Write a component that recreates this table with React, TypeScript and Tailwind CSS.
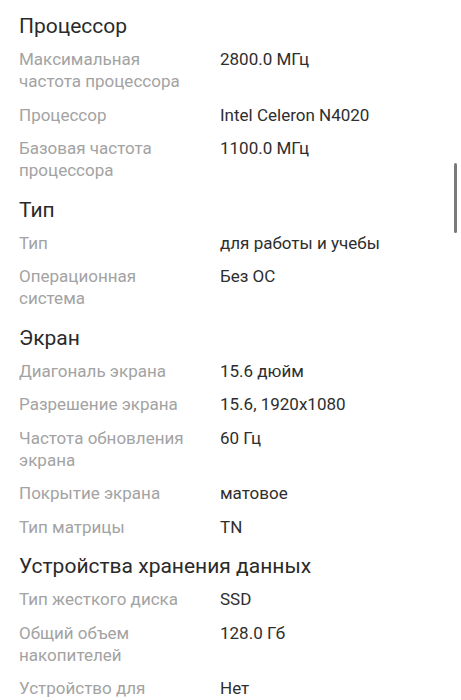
type Spec = { label: string; value: string };
type Section = { title: string; items: Spec[] };

const sections: Section[] = [
  {
    title: "Процессор",
    items: [
      { label: "Максимальная частота процессора", value: "2800.0 МГц" },
      { label: "Процессор", value: "Intel Celeron N4020" },
      { label: "Базовая частота процессора", value: "1100.0 МГц" },
    ],
  },
  {
    title: "Тип",
    items: [
      { label: "Тип", value: "для работы и учебы" },
      { label: "Операционная система", value: "Без ОС" },
    ],
  },
  {
    title: "Экран",
    items: [
      { label: "Диагональ экрана", value: "15.6 дюйм" },
      { label: "Разрешение экрана", value: "15.6, 1920x1080" },
      { label: "Частота обновления экрана", value: "60 Гц" },
      { label: "Покрытие экрана", value: "матовое" },
      { label: "Тип матрицы", value: "TN" },
    ],
  },
  {
    title: "Устройства хранения данных",
    items: [
      { label: "Тип жесткого диска", value: "SSD" },
      { label: "Общий объем накопителей", value: "128.0 Гб" },
      { label: "Устройство для чтения карт памяти", value: "Нет" },
    ],
  },
];

function SpecRow({ label, value }: Spec) {
  return (
    <div className="grid grid-cols-[180px_1fr] gap-x-[21px] text-[17px] leading-[22px]">
      <div className="text-[#a3a3a3]">{label}</div>
      <div className="text-[#2e2e2e]">{value}</div>
    </div>
  );
}

export default function App() {
  return (
    <div className="relative min-h-[700px] bg-white px-[19px] pt-[12px] font-['Roboto','Noto_Sans',sans-serif]">
      {sections.map((s) => (
        <section key={s.title} className="mb-[14.5px]">
          <h2 className="mb-[8px] text-[21px] leading-[28px] font-normal text-[#2a2a2a]">{s.title}</h2>
          <div className="flex flex-col gap-[11.5px]">
            {s.items.map((it) => (
              <SpecRow key={it.label} {...it} />
            ))}
          </div>
        </section>
      ))}
      {/* scroll indicator */}
      <div className="absolute right-[4px] top-[163px] h-[70px] w-[3px] rounded-full bg-[#7a7a7a]" />
    </div>
  );
}
